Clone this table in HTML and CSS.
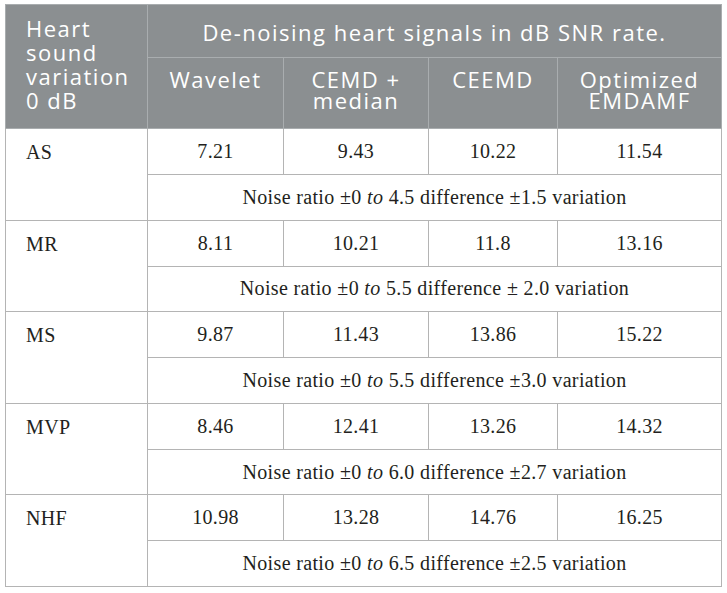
FILE: index.html
```html
<!DOCTYPE html>
<html>
<head>
<meta charset="utf-8">
<link rel="stylesheet" href="styles.css">
</head>
<body>
<table class="snr">
  <colgroup>
    <col class="c1"><col class="c2"><col class="c3"><col class="c4"><col class="c5">
  </colgroup>
  <thead>
    <tr class="h1">
      <th rowspan="2" class="hvar">Heart<br>sound<br>variation<br>0 dB</th>
      <th colspan="4" class="htitle">De-noising heart signals in dB SNR rate.</th>
    </tr>
    <tr class="h2">
      <th>Wavelet</th>
      <th>CEMD +<br>median</th>
      <th>CEEMD</th>
      <th>Optimized<br>EMDAMF</th>
    </tr>
  </thead>
  <tbody>
    <tr class="val"><td rowspan="2" class="name">AS</td><td>7.21</td><td>9.43</td><td>10.22</td><td>11.54</td></tr>
    <tr class="noise"><td colspan="4">Noise ratio ±0 <i>to</i> 4.5 difference ±1.5 variation</td></tr>
    <tr class="val"><td rowspan="2" class="name">MR</td><td>8.11</td><td>10.21</td><td>11.8</td><td>13.16</td></tr>
    <tr class="noise"><td colspan="4">Noise ratio ±0 <i>to</i> 5.5 difference ± 2.0 variation</td></tr>
    <tr class="val"><td rowspan="2" class="name">MS</td><td>9.87</td><td>11.43</td><td>13.86</td><td>15.22</td></tr>
    <tr class="noise"><td colspan="4">Noise ratio ±0 <i>to</i> 5.5 difference ±3.0 variation</td></tr>
    <tr class="val"><td rowspan="2" class="name">MVP</td><td>8.46</td><td>12.41</td><td>13.26</td><td>14.32</td></tr>
    <tr class="noise"><td colspan="4">Noise ratio ±0 <i>to</i> 6.0 difference ±2.7 variation</td></tr>
    <tr class="val"><td rowspan="2" class="name">NHF</td><td>10.98</td><td>13.28</td><td>14.76</td><td>16.25</td></tr>
    <tr class="noise"><td colspan="4">Noise ratio ±0 <i>to</i> 6.5 difference ±2.5 variation</td></tr>
  </tbody>
</table>
</body>
</html>
```
FILE: styles.css
```css
html, body {
  margin: 0;
  padding: 0;
  background: #ffffff;
}
body {
  padding: 4px 0 0 5px;
}
.snr {
  border-collapse: collapse;
  table-layout: fixed;
  width: 716px;
  border: 1px solid #b4b4b4;
}
.c1 { width: 142px; }
.c2 { width: 136px; }
.c3 { width: 145px; }
.c4 { width: 129px; }
.c5 { width: 164px; }

.snr th {
  background: #8b8f91;
  color: #ffffff;
  font-family: "Open Sans", "Liberation Sans", sans-serif;
  font-weight: 400;
  font-size: 22px;
  letter-spacing: 1.5px;
  line-height: 21px;
  border: 1px solid #a9adaf;
  padding: 0 2px;
  text-align: center;
  vertical-align: top;
  white-space: nowrap;
}
.snr .h1 { height: 53px; }
.snr .h2 { height: 71px; }
.snr th.hvar {
  text-align: left;
  vertical-align: middle;
  line-height: 24px;
  padding: 0 2px 5px 20px;
}
.snr th.htitle {
  vertical-align: middle;
  padding-top: 2px;
}
.snr .h2 th {
  padding-top: 11px;
}

.snr td {
  font-family: "Liberation Serif", "Times New Roman", serif;
  font-size: 20px;
  letter-spacing: 0.35px;
  color: #231f20;
  border: 1px solid #b4b4b4;
  text-align: center;
  vertical-align: middle;
  padding: 0 4px;
  white-space: nowrap;
}
.snr .val { height: 46px; }
.snr .noise { height: 45.6px; }
.snr td.name {
  text-align: left;
  vertical-align: top;
  padding: 12px 4px 0 20px;
}
.snr .noise i {
  font-style: italic;
}
```
